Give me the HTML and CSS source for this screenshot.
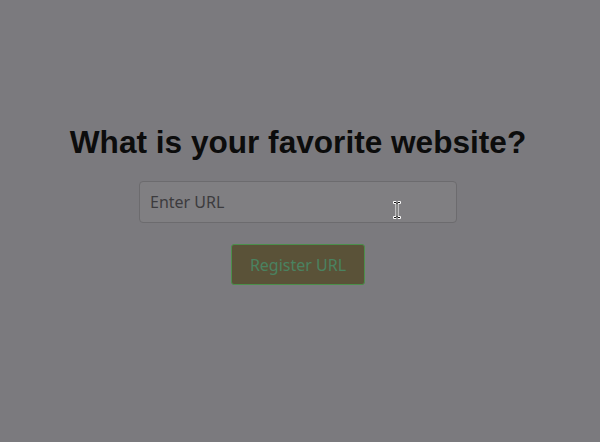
FILE: index.html
```html
<!DOCTYPE html>
<html>
<head>
<meta charset="utf-8">
<link rel="stylesheet" href="styles.css">
</head>
<body>
<main class="page">
  <h1 class="title">What is your favorite website?</h1>
  <div class="field">
    <input class="url" type="text" placeholder="Enter URL">
    <svg class="cursor" width="10" height="21" viewBox="0 0 10 21">
      <path d="M1.5 1.5h2.5l1 1 1-1h2.5v2h-2.5v13h2.5v2h-2.5l-1-1-1 1h-2.5v-2h2.5v-13h-2.5z" fill="#111" stroke="#fff" stroke-width="1"/>
    </svg>
  </div>
  <button class="btn">Register URL</button>
</main>
</body>
</html>
```
FILE: styles.css
```css
html, body {
  margin: 0;
  padding: 0;
  background: #7b7a7e;
  height: 100%;
}
.page {
  height: 442px;
  display: flex;
  flex-direction: column;
  align-items: center;
  padding-top: 124px;
  padding-right: 4px;
  box-sizing: border-box;
}
.title {
  margin: 0;
  font-family: "Liberation Sans", Arial, sans-serif;
  font-weight: bold;
  font-size: 31.6px;
  line-height: 37px;
  color: #0c0c0c;
}
.field {
  position: relative;
  margin-top: 20px;
}
.url {
  display: block;
  width: 318px;
  height: 42px;
  box-sizing: border-box;
  background: #807f82;
  border: 1px solid #6c6b6e;
  border-radius: 4px;
  padding: 0 10px;
  font-family: "Noto Sans", "Open Sans", sans-serif;
  font-size: 16px;
  color: #333;
  outline: none;
}
.url::placeholder {
  color: #3c3b3e;
}
.cursor {
  position: absolute;
  left: 253px;
  top: 19px;
}
.btn {
  margin-top: 21px;
  width: 134px;
  height: 41px;
  box-sizing: border-box;
  background: #5a5238;
  border: 1px solid #4b8f4b;
  border-radius: 3px;
  font-family: "Noto Sans", "Open Sans", sans-serif;
  font-size: 16px;
  color: #4a8260;
  padding: 0;
}
```
